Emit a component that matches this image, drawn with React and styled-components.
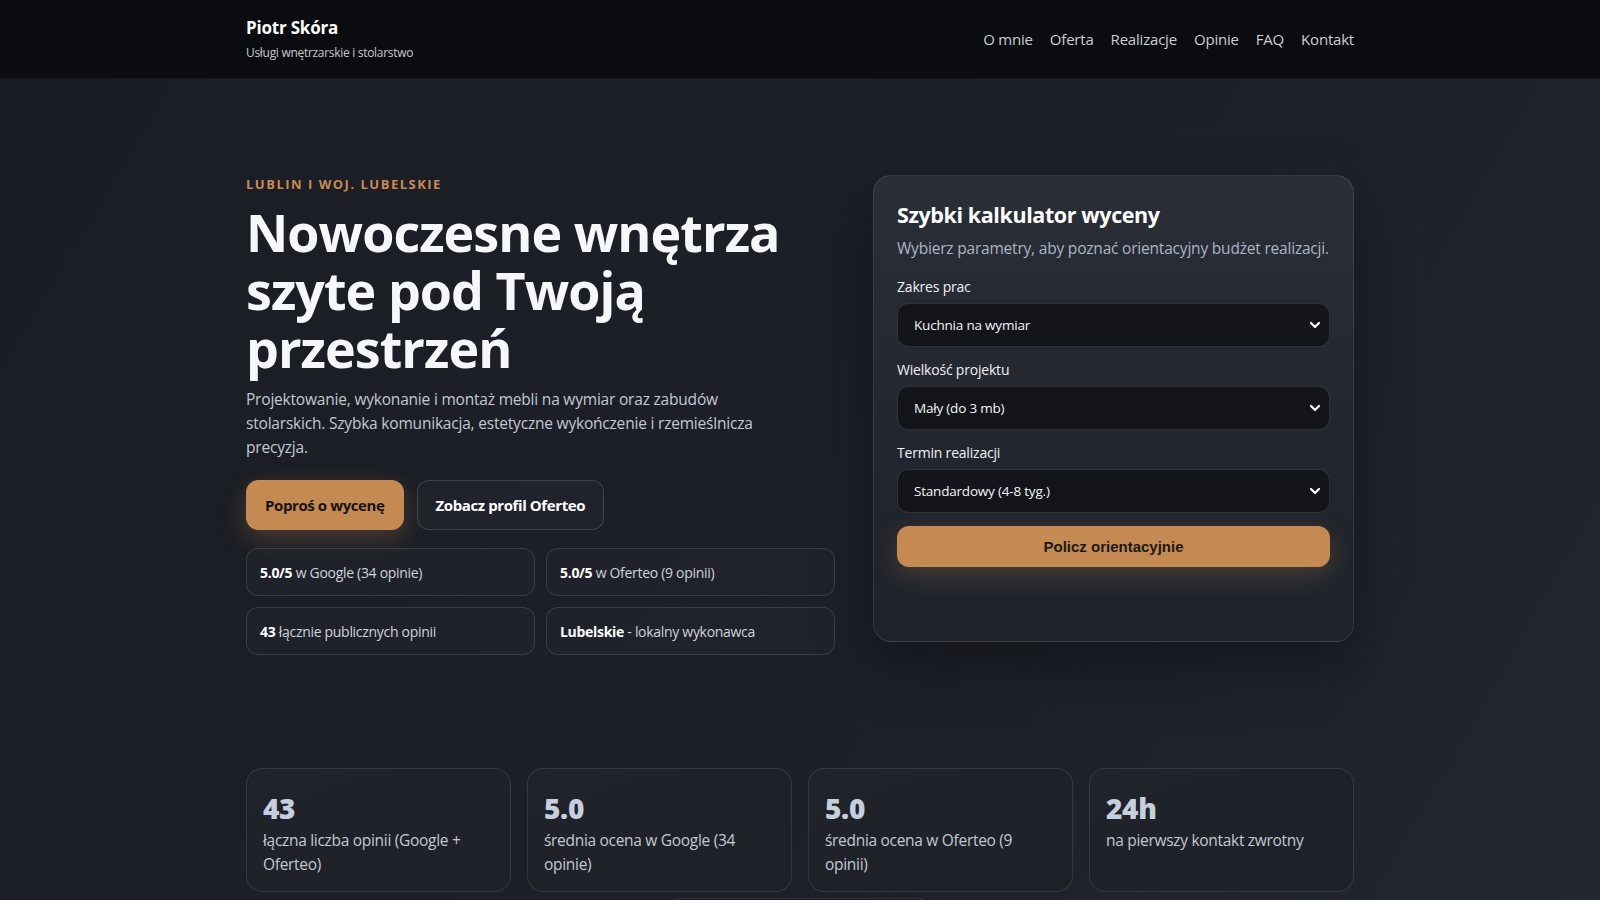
import React from 'react';
import styled, { createGlobalStyle } from 'styled-components';

const GlobalStyle = createGlobalStyle`
  * { box-sizing: border-box; }
  body {
    margin: 0;
    background: #1b1e25;
    font-family: "Open Sans", "Noto Sans", sans-serif;
    color: #f3f4f7;
  }
`;

// layout
const Page = styled.div`
  min-height: 100vh;
  background: linear-gradient(120deg, #1a1d24 0%, #1d2028 55%, #22262e 100%);
  overflow: hidden;
`;

const Container = styled.div`
  max-width: 1140px;
  margin: 0 auto;
  padding: 0 16px;
`;

const Header = styled.header`
  background: #0b0c0f;
  border-bottom: 1px solid rgba(255, 255, 255, 0.04);
`;

const HeaderInner = styled(Container)`
  height: 78px;
  display: flex;
  align-items: center;
  justify-content: space-between;
`;

const Brand = styled.div`
  display: flex;
  flex-direction: column;
  gap: 5px;
  margin-top: -2px;
`;

const BrandName = styled.div`
  font-size: 17px;
  font-weight: 700;
  color: #ffffff;
  letter-spacing: -0.2px;
`;

const BrandSub = styled.div`
  font-size: 12px;
  color: #c4c8cf;
  letter-spacing: -0.3px;
`;

const Nav = styled.nav`
  display: flex;
  gap: 17px;
`;

const NavLink = styled.a`
  font-size: 15px;
  color: #c9cdd5;
  text-decoration: none;
  letter-spacing: -0.2px;
`;

const Hero = styled(Container)`
  padding-top: 96px;
  display: grid;
  grid-template-columns: 589px 481px;
  justify-content: space-between;
  align-items: start;
`;

const Kicker = styled.div`
  font-size: 13px;
  line-height: 18px;
  font-weight: 700;
  letter-spacing: 1.5px;
  color: #c98a4e;
  text-transform: uppercase;
`;

const Title = styled.h1`
  margin: 10px 0 0;
  font-size: 52px;
  line-height: 58px;
  font-weight: 700;
  letter-spacing: -0.95px;
  color: #f6f7fa;
`;

const Lead = styled.p`
  margin: 10px 0 0;
  max-width: 520px;
  font-size: 15.5px;
  line-height: 24px;
  color: #c2c9d3;
  letter-spacing: -0.2px;
`;

const Actions = styled.div`
  display: flex;
  gap: 13px;
  margin-top: 21px;
`;

const Button = styled.button`
  height: 50px;
  padding: 0 18px;
  border-radius: 12px;
  font-family: "Open Sans", sans-serif;
  font-size: 15px;
  font-weight: 700;
  letter-spacing: -0.4px;
  cursor: pointer;
  border: 1px solid ${props => props.primary ? '#c58a52' : 'rgba(255,255,255,0.14)'};
  background: ${props => props.primary ? '#c58a52' : 'rgba(255,255,255,0.02)'};
  color: ${props => props.primary ? '#16130f' : '#ffffff'};
  box-shadow: ${props => props.primary ? '0 8px 24px rgba(197,138,82,0.28)' : 'none'};
`;

const Chips = styled.div`
  margin-top: 18px;
  display: grid;
  grid-template-columns: 1fr 1fr;
  gap: 11px;
`;

const Chip = styled.div`
  height: 48px;
  display: flex;
  align-items: center;
  padding: 0 13px;
  border-radius: 12px;
  border: 1px solid rgba(255, 255, 255, 0.12);
  background: rgba(255, 255, 255, 0.015);
  font-size: 14px;
  color: #cfd3da;
  letter-spacing: -0.3px;

  strong { color: #ffffff; font-weight: 700; }
`;

// calculator card
const Card = styled.div`
  min-height: 467px;
  padding: 24px 23px;
  border-radius: 18px;
  border: 1px solid rgba(255, 255, 255, 0.1);
  background: linear-gradient(180deg, #2a2e36 0%, #22262e 60%, #1f232a 100%);
  box-shadow: 0 24px 60px rgba(0, 0, 0, 0.35);
`;

const CardTitle = styled.h2`
  margin: 0;
  font-size: 21.5px;
  line-height: 30px;
  font-weight: 700;
  color: #ffffff;
  letter-spacing: -0.4px;
`;

const CardSub = styled.p`
  margin: 6px 0 0;
  font-size: 15.5px;
  line-height: 24px;
  color: #a9b6c6;
  letter-spacing: -0.2px;
`;

const Fields = styled.div`
  margin-top: 17px;
  display: flex;
  flex-direction: column;
  gap: 13px;
`;

const Field = styled.label`
  display: flex;
  flex-direction: column;
  gap: 6px;
`;

const Label = styled.span`
  font-size: 14px;
  line-height: 20px;
  color: #f0f2f5;
  letter-spacing: -0.2px;
`;

const SelectWrap = styled.div`
  position: relative;
`;

const Select = styled.select`
  width: 100%;
  height: 44px;
  padding: 0 40px 0 16px;
  appearance: none;
  border-radius: 11px;
  border: 1px solid rgba(255, 255, 255, 0.12);
  background: #13151a;
  color: #f3f4f7;
  font-family: "Open Sans", sans-serif;
  font-size: 13.5px;
  letter-spacing: -0.2px;
  outline: none;
`;

const Chevron = styled.svg`
  position: absolute;
  right: 9px;
  top: 50%;
  transform: translateY(-50%);
  pointer-events: none;
`;

const CalcButton = styled.button`
  margin-top: 13px;
  width: 100%;
  height: 41px;
  border: none;
  border-radius: 12px;
  background: #c58a52;
  color: #1b1a18;
  font-family: "Liberation Sans", Arial, sans-serif;
  font-size: 15px;
  font-weight: 700;
  cursor: pointer;
  box-shadow: 0 8px 26px rgba(197, 138, 82, 0.25);
`;

// stats
const Stats = styled(Container)`
  margin-top: 113px;
  display: grid;
  grid-template-columns: repeat(4, 1fr);
  gap: 16px;
`;

const StatCard = styled.div`
  height: 124px;
  padding: 22px 16px 0;
  border-radius: 16px;
  border: 1px solid rgba(255, 255, 255, 0.1);
  background: linear-gradient(160deg, #20232a 0%, #1e2128 100%);
`;

const StatValue = styled.div`
  font-size: 28px;
  line-height: 34px;
  font-weight: 800;
  color: #c6cfdd;
  letter-spacing: -0.3px;
`;

const StatText = styled.div`
  margin-top: 4px;
  font-size: 15.5px;
  line-height: 23.5px;
  color: #c2c9d3;
  letter-spacing: -0.3px;
`;

const NextSection = styled.div`
  margin-top: 6px;
  display: flex;
  justify-content: center;
`;

const Peek = styled.div`
  width: 262px;
  height: 40px;
  margin-left: -2px;
  border-radius: 12px;
  border: 1px solid rgba(255, 255, 255, 0.14);
  background: #15171c;
`;

const links = ['O mnie', 'Oferta', 'Realizacje', 'Opinie', 'FAQ', 'Kontakt'];

const fields = [
  { label: 'Zakres prac', value: 'Kuchnia na wymiar', options: ['Kuchnia na wymiar', 'Szafa wnękowa', 'Garderoba', 'Zabudowa łazienki'] },
  { label: 'Wielkość projektu', value: 'Mały (do 3 mb)', options: ['Mały (do 3 mb)', 'Średni (3-6 mb)', 'Duży (powyżej 6 mb)'] },
  { label: 'Termin realizacji', value: 'Standardowy (4-8 tyg.)', options: ['Standardowy (4-8 tyg.)', 'Przyspieszony (2-4 tyg.)'] },
];

const stats = [
  { value: '43', text: 'łączna liczba opinii (Google + Oferteo)' },
  { value: '5.0', text: 'średnia ocena w Google (34 opinie)' },
  { value: '5.0', text: 'średnia ocena w Oferteo (9 opinii)' },
  { value: '24h', text: 'na pierwszy kontakt zwrotny' },
];

const App = () => {
  return (
    <Page>
      <GlobalStyle />
      <Header>
        <HeaderInner>
          <Brand>
            <BrandName>Piotr Skóra</BrandName>
            <BrandSub>Usługi wnętrzarskie i stolarstwo</BrandSub>
          </Brand>
          <Nav>
            {links.map(l => <NavLink key={l} href="#">{l}</NavLink>)}
          </Nav>
        </HeaderInner>
      </Header>

      <Hero>
        <div>
          <Kicker>Lublin i woj. lubelskie</Kicker>
          <Title>Nowoczesne wnętrza szyte pod Twoją przestrzeń</Title>
          <Lead>
            Projektowanie, wykonanie i montaż mebli na wymiar oraz zabudów stolarskich. Szybka komunikacja, estetyczne wykończenie i rzemieślnicza precyzja.
          </Lead>
          <Actions>
            <Button primary>Poproś o wycenę</Button>
            <Button>Zobacz profil Oferteo</Button>
          </Actions>
          <Chips>
            <Chip><span><strong>5.0/5</strong> w Google (34 opinie)</span></Chip>
            <Chip><span><strong>5.0/5</strong> w Oferteo (9 opinii)</span></Chip>
            <Chip><span><strong>43</strong> łącznie publicznych opinii</span></Chip>
            <Chip><span><strong>Lubelskie</strong> - lokalny wykonawca</span></Chip>
          </Chips>
        </div>

        <Card>
          <CardTitle>Szybki kalkulator wyceny</CardTitle>
          <CardSub>Wybierz parametry, aby poznać orientacyjny budżet realizacji.</CardSub>
          <Fields>
            {fields.map(f => (
              <Field key={f.label}>
                <Label>{f.label}</Label>
                <SelectWrap>
                  <Select defaultValue={f.value}>
                    {f.options.map(o => <option key={o}>{o}</option>)}
                  </Select>
                  <Chevron width="12" height="12" viewBox="0 0 12 12">
                    <polyline points="2,4 6,8 10,4" fill="none" stroke="#ffffff" strokeWidth="2.2" strokeLinecap="round" strokeLinejoin="round" />
                  </Chevron>
                </SelectWrap>
              </Field>
            ))}
          </Fields>
          <CalcButton type="button">Policz orientacyjnie</CalcButton>
        </Card>
      </Hero>

      <Stats>
        {stats.map((s, i) => (
          <StatCard key={i}>
            <StatValue>{s.value}</StatValue>
            <StatText>{s.text}</StatText>
          </StatCard>
        ))}
      </Stats>

      <NextSection>
        <Peek />
      </NextSection>
    </Page>
  );
};

export default App;
